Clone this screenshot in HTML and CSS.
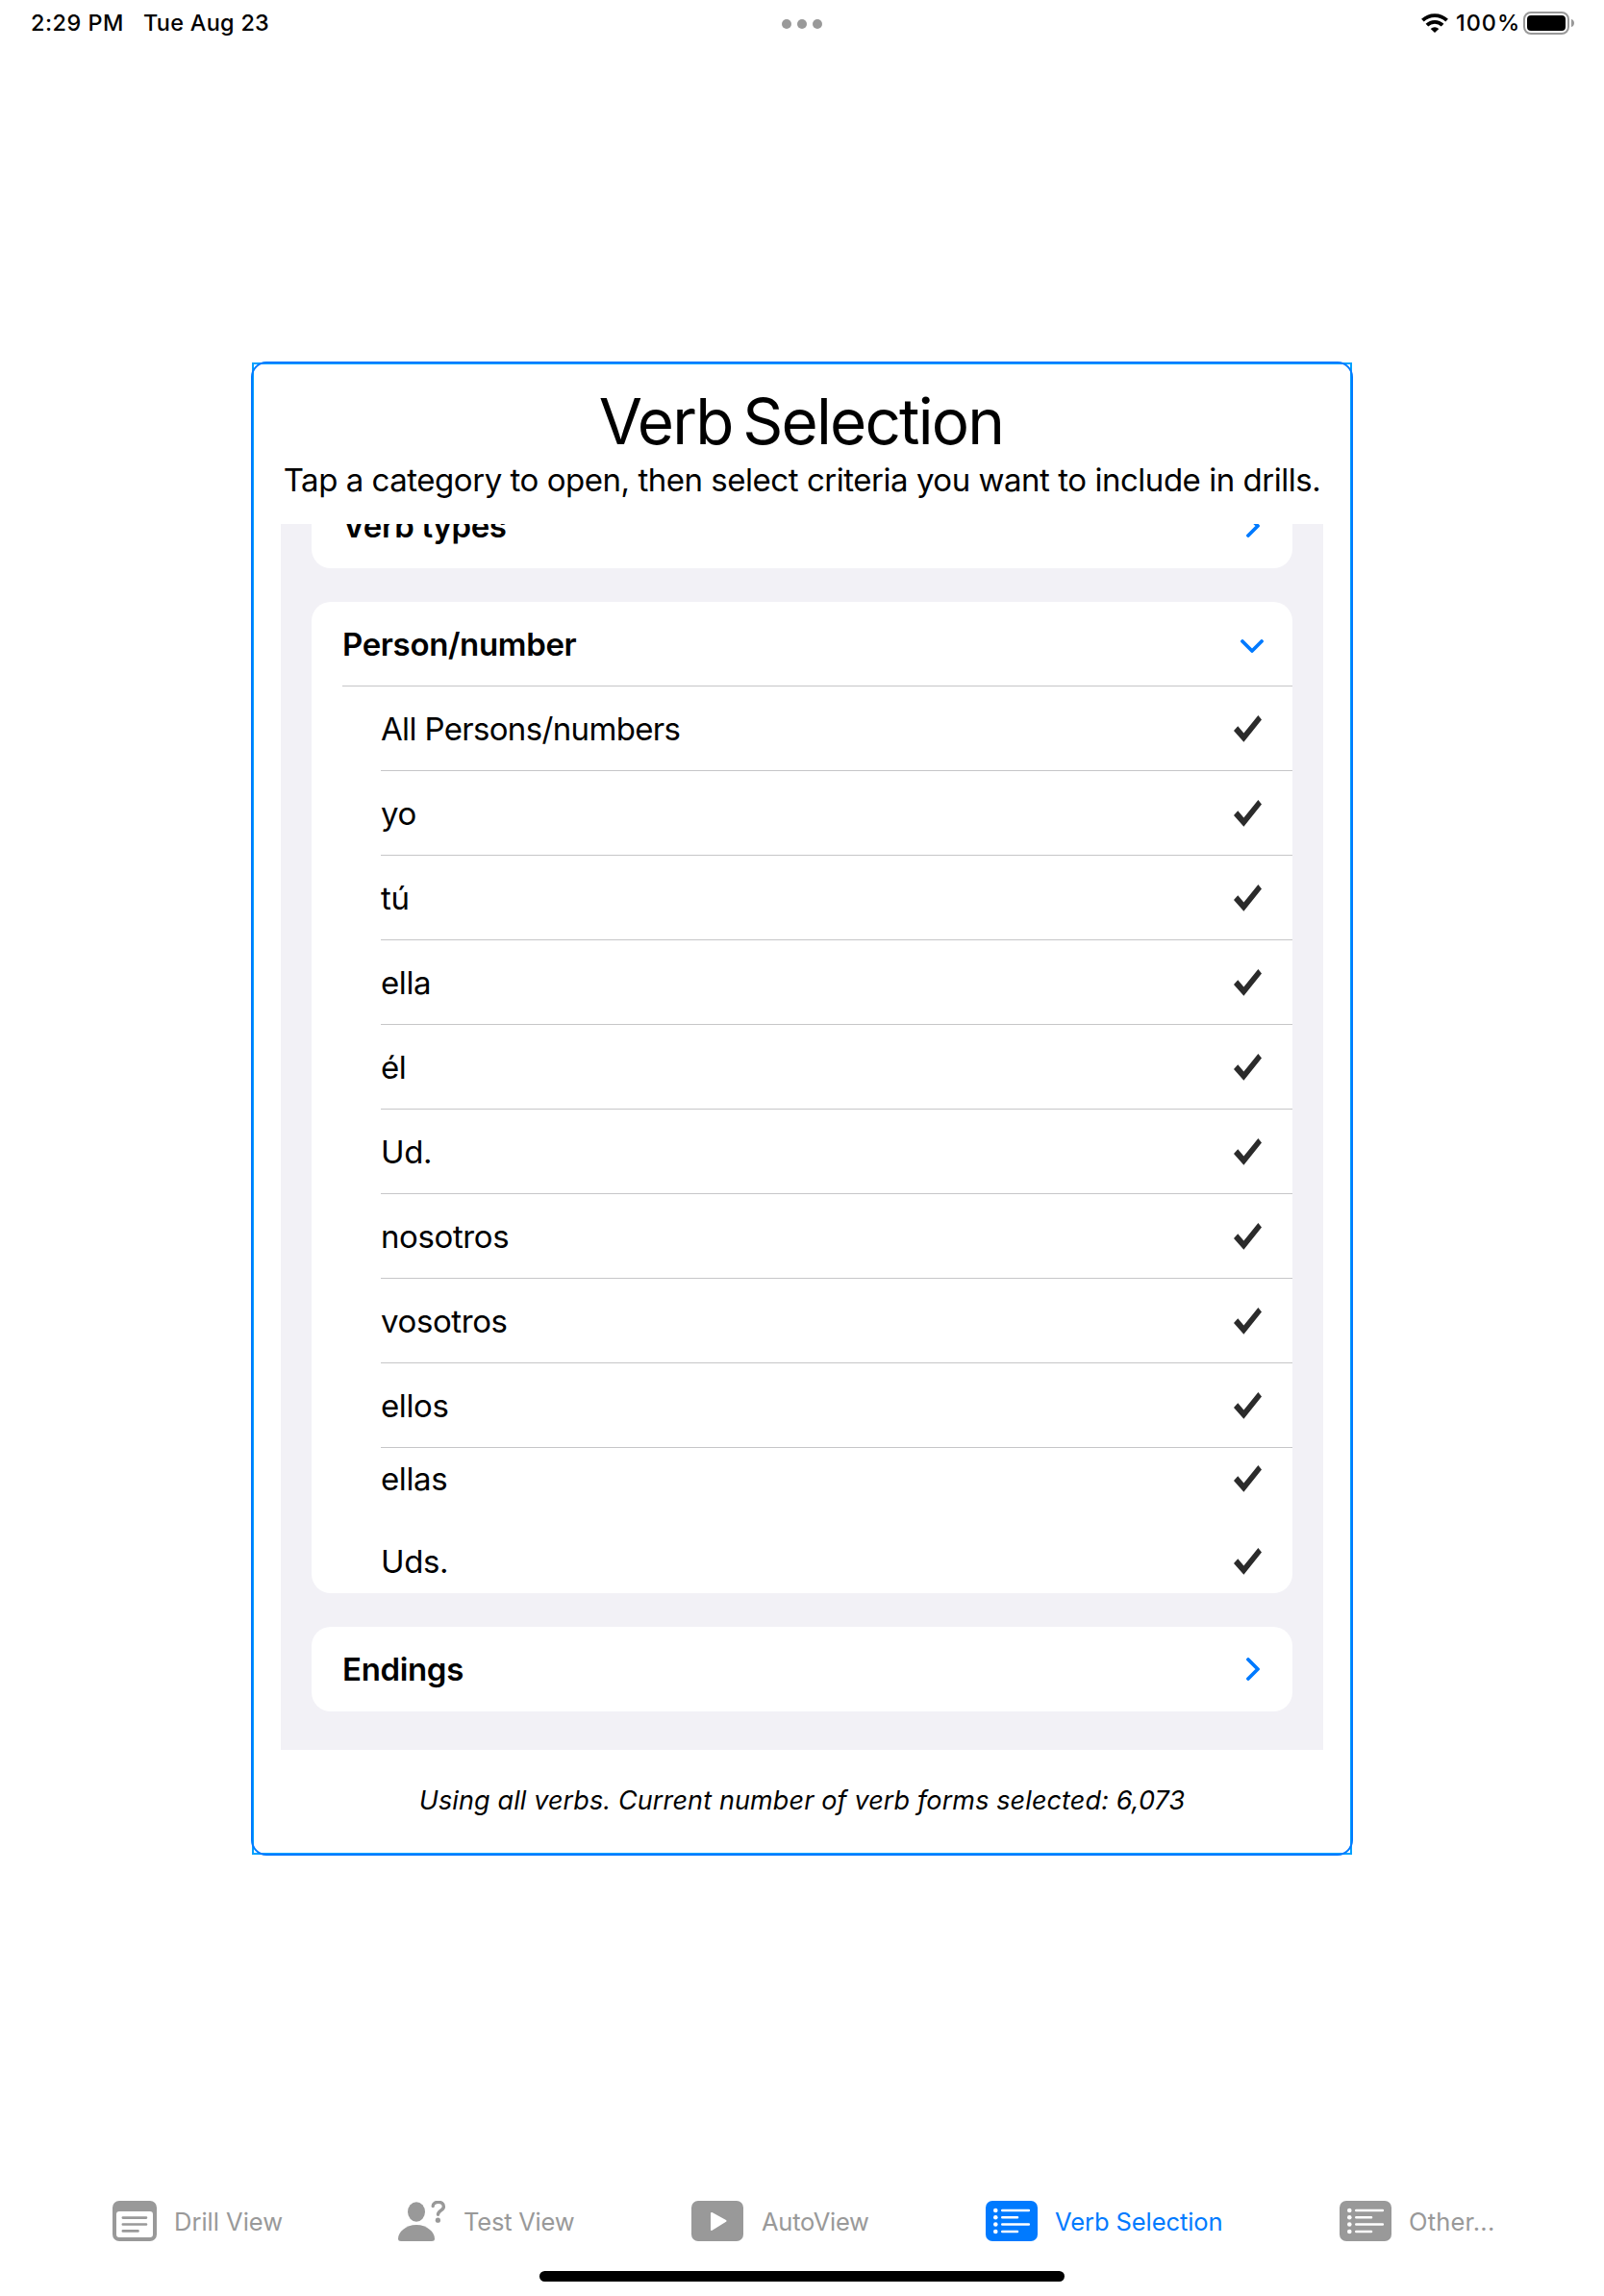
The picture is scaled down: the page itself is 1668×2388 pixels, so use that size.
FILE: index.html
```html
<!DOCTYPE html>
<html lang="en">
<head>
<meta charset="utf-8">
<title>Verb Selection</title>
<link rel="stylesheet" href="styles.css">
</head>
<body>
<svg class="defs" width="0" height="0">
  <symbol id="check" viewBox="0 0 29 28"><path d="M0 16L4.3 11.3L10.4 18.4L25.4 0L29 4.5L10.4 27.8Z" fill="#2b2b2b"/></symbol>
  <symbol id="down" viewBox="0 0 24 14"><path d="M2 2L12 12L22 2" fill="none" stroke="#007aff" stroke-width="3.8" stroke-linecap="round" stroke-linejoin="round"/></symbol>
  <symbol id="right" viewBox="0 0 14 24"><path d="M2 2L12 12L2 22" fill="none" stroke="#007aff" stroke-width="3.8" stroke-linecap="round" stroke-linejoin="round"/></symbol>
  <symbol id="list" viewBox="0 0 54 42"><rect width="54" height="42" rx="7" fill="currentColor"/><g fill="#fff"><circle cx="10.3" cy="10" r="2.3"/><circle cx="10.3" cy="17.2" r="2.3"/><circle cx="10.3" cy="24.5" r="2.3"/><circle cx="10.3" cy="32" r="2.3"/></g><path d="M17.3 10H44.8M17.3 17.2H33M17.3 24.5H44.8M17.3 32H33" stroke="#fff" stroke-width="2.6" stroke-linecap="round"/></symbol>
</svg>
<header class="status">
  <span class="time">2:29 PM</span>
  <span class="date">Tue Aug 23</span>
  <svg class="dots" width="42" height="10"><g fill="#999"><circle cx="5" cy="5" r="5"/><circle cx="21" cy="5" r="5"/><circle cx="37" cy="5" r="5"/></g></svg>
  <svg class="wifi" width="28" height="20" viewBox="0 0 28 20"><g fill="none" stroke="#000" stroke-width="3.8"><path d="M1.4 7.2A18 18 0 0 1 26.6 7.2"/><path d="M5.9 12.1A11.6 11.6 0 0 1 22.1 12.1"/></g><path d="M14 20L9.7 15.9A6.2 6.2 0 0 1 18.3 15.9Z"/></svg>
  <span class="percent">100%</span>
  <svg class="battery" width="54" height="24" viewBox="0 0 54 24"><rect x="1" y="1" width="46" height="22" rx="7" fill="none" stroke="#999" stroke-width="2"/><rect x="4" y="4" width="40" height="16" rx="4"/><path d="M50 8C54 9 54 15 50 16Z" fill="#999"/></svg>
</header>
<main class="panel">
  <h1 class="title">Verb Selection</h1>
  <p class="hint">Tap a category to open, then select criteria you want to include in drills.</p>
  <div class="list">
    <section class="card first"><div class="head"><span class="types">Verb types</span><svg class="go"><use href="#right"/></svg></div></section>
    <section class="card person">
      <div class="head open"><span>Person/number</span><svg class="open-icon"><use href="#down"/></svg></div>
      <div class="row"><span class="all">All Persons/numbers</span><svg class="check"><use href="#check"/></svg></div>
      <div class="row"><span>yo</span><svg class="check"><use href="#check"/></svg></div>
      <div class="row"><span>tú</span><svg class="check"><use href="#check"/></svg></div>
      <div class="row"><span>ella</span><svg class="check"><use href="#check"/></svg></div>
      <div class="row"><span>él</span><svg class="check"><use href="#check"/></svg></div>
      <div class="row"><span>Ud.</span><svg class="check"><use href="#check"/></svg></div>
      <div class="row"><span>nosotros</span><svg class="check"><use href="#check"/></svg></div>
      <div class="row"><span>vosotros</span><svg class="check"><use href="#check"/></svg></div>
      <div class="row"><span>ellos</span><svg class="check"><use href="#check"/></svg></div>
      <div class="row ellas"><span>ellas</span><svg class="check"><use href="#check"/></svg></div>
      <div class="row uds"><span>Uds.</span><svg class="check"><use href="#check"/></svg></div>
    </section>
    <section class="card"><div class="head"><span>Endings</span><svg class="go"><use href="#right"/></svg></div></section>
  </div>
  <p class="summary">Using all verbs. Current number of verb forms selected: 6,073</p>
</main>
<nav class="tabs">
  <a class="tab"><svg width="46" height="42" viewBox="0 0 46 42"><path fill-rule="evenodd" fill="currentColor" d="M7 0H39A7 7 0 0 1 46 7V35A7 7 0 0 1 39 42H7A7 7 0 0 1 0 35V7A7 7 0 0 1 7 0ZM7 11A3 3 0 0 0 4 14V35A3 3 0 0 0 7 38H39A3 3 0 0 0 42 35V14A3 3 0 0 0 39 11Z"/><path d="M10.8 17.6H35M10.8 24.5H35M10.8 31.4H26.5" stroke="currentColor" stroke-width="2.6" stroke-linecap="round"/></svg><span>Drill View</span></a>
  <a class="tab test"><svg width="50" height="43" viewBox="0 0 50 43"><g fill="currentColor"><ellipse cx="19" cy="11.5" rx="9" ry="10.3"/><path d="M3 42Q0 42 0 39.5C0 32.5 8 25 19 25S38 32.5 38 39.5Q38 42 35 42Z"/><circle cx="41.4" cy="20.2" r="2.6"/></g><path d="M36.2 5.5C36.2 0 47.4 -0.4 47.4 6C47.4 10.2 41.5 10.2 41.5 14.3" fill="none" stroke="currentColor" stroke-width="3.4" stroke-linecap="round"/></svg><span>Test View</span></a>
  <a class="tab auto"><svg width="54" height="42" viewBox="0 0 54 42"><rect width="54" height="42" rx="7" fill="currentColor"/><path d="M21 13L35.5 21L21 30Z" fill="#fff" stroke="#fff" stroke-width="2" stroke-linejoin="round"/></svg><span>AutoView</span></a>
  <a class="tab active"><svg width="54" height="42"><use href="#list"/></svg><span>Verb Selection</span></a>
  <a class="tab other"><svg width="54" height="42"><use href="#list"/></svg><span>Other...</span></a>
</nav>
<div class="home"></div>
</body>
</html>
```
FILE: styles.css
```css
* { box-sizing: border-box; }
body { margin: 0; width: 1668px; height: 2388px; display: flex; flex-direction: column; background: #fff; color: #000; font-family: Inter, "Liberation Sans", sans-serif; overflow: hidden; }
h1, p { margin: 0; font-weight: 400; white-space: nowrap; }
span { white-space: nowrap; }
svg { display: block; flex: none; }
.defs { position: absolute; }

.status { height: 47px; padding-left: 32px; display: flex; align-items: center; font-size: 23.4px; font-weight: 500; flex: none; }
.time { width: 117px; letter-spacing: 0.5px; }
.date { width: 664px; letter-spacing: 0.3px; }
.dots { margin-top: 3px; }
.wifi { margin: 1px 0 0 623px; }
.percent { width: 70px; margin-left: 8px; letter-spacing: 1px; }
.battery { margin-top: 1px; }

.panel { position: relative; width: 1146px; height: 1554px; margin: 329px 0 0 261px; padding: 31px; display: flex; flex-direction: column; align-items: center; flex: none; border: 2px solid #007aff; border-radius: 16px; }
.panel::before { content: ""; position: absolute; z-index: -1; inset: -1px; border: 2px solid #00a2ff; }
.title { font-size: 65.6px; line-height: 80px; height: 80px; margin-top: -11px; letter-spacing: -1.8px; word-spacing: -6px; padding-right: 2px; }
.hint { font-size: 33px; line-height: 42px; height: 40px; letter-spacing: -0.47px; }
.list { width: 1084px; height: 1275px; margin-top: 27px; padding: 0 32px; background: #f2f1f6; overflow: hidden; flex: none; }
.card { width: 1020px; margin-bottom: 35px; background: #fff; border-radius: 20px; overflow: hidden; font-size: 33px; line-height: 40px; }
.first { margin-top: -42px; }
.head { height: 88px; margin-left: 32px; padding-right: 34px; display: flex; align-items: center; justify-content: space-between; font-weight: 600; letter-spacing: -0.35px; }
.go { width: 14px; height: 24px; }
.open { padding-right: 30px; border-bottom: 1px solid #c6c6c8; }
.open-icon { width: 24px; height: 14px; margin-top: 5px; }
.row { height: 88px; margin-left: 72px; padding-right: 32px; display: flex; align-items: center; justify-content: space-between; border-bottom: 1px solid #c6c6c8; letter-spacing: -0.4px; }
.all { letter-spacing: -0.66px; }
.check { width: 29px; height: 28px; }
.ellas { height: 64px; border: 0; }
.uds { height: 87px; border: 0; padding-top: 20px; }
.person { height: 1031px; }
.summary { font-size: 27px; line-height: 34px; font-style: italic; margin-top: 36px; letter-spacing: 0.12px; }

.tabs { margin-top: 359px; padding-left: 117px; height: 43px; display: grid; grid-template-columns: 297px 305px 306px 368px 1fr; flex: none; color: #999; font-size: 25.5px; line-height: 32px; }
.tab { display: flex; align-items: flex-start; }
.tab span { margin: 6px 0 0 18px; }
.test span { letter-spacing: -0.22px; }
.auto span { margin-left: 19px; letter-spacing: -0.27px; }
.active { color: #007aff; }
.active span { letter-spacing: -0.08px; }
.other span { letter-spacing: 0.2px; }
.home { width: 546px; height: 11px; margin: 30px 0 0 561px; border-radius: 6px; background: #000; }
```
